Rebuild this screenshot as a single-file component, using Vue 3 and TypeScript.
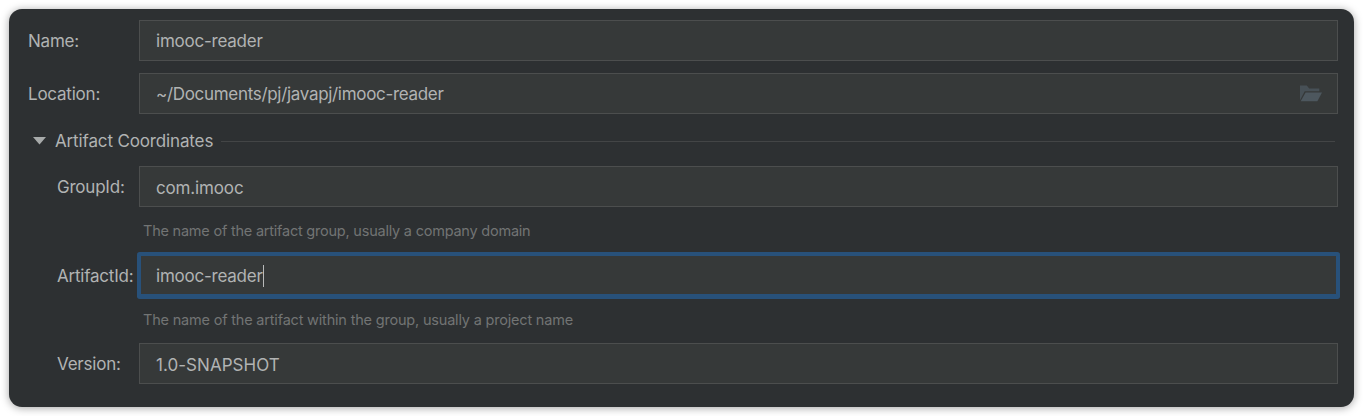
<script setup lang="ts">
import { ref } from 'vue'

interface Field {
  key: string
  label: string
  hint?: string
  browse?: boolean
}

const projectFields: Field[] = [
  { key: 'name', label: 'Name:' },
  { key: 'location', label: 'Location:', browse: true },
]

const coordinateFields: Field[] = [
  { key: 'group', label: 'GroupId:', hint: 'The name of the artifact group, usually a company domain' },
  { key: 'artifact', label: 'ArtifactId:', hint: 'The name of the artifact within the group, usually a project name' },
  { key: 'version', label: 'Version:' },
]

const values = ref<Record<string, string>>({
  name: 'imooc-reader',
  location: '~/Documents/pj/javapj/imooc-reader',
  group: 'com.imooc',
  artifact: 'imooc-reader',
  version: '1.0-SNAPSHOT',
})

const focused = ref('artifact')
</script>

<template>
  <main class="stage">
    <form class="panel" @submit.prevent>
      <div v-for="f in projectFields" :key="f.key" class="row" :class="f.key">
        <span class="label">{{ f.label }}</span>
        <div class="field" :class="{ focused: focused === f.key }" @click="focused = f.key">
          <span class="value">{{ values[f.key] }}</span>
          <i v-if="focused === f.key" class="caret"></i>
          <svg v-if="f.browse" class="folder" width="22" height="17" viewBox="0 0 22 17">
            <path d="M0 0.5H6.8L9.2 3.5H19.3V6.2H4.7L0 15.2Z" fill="#475056" />
            <path d="M5.6 7.5H22L17.4 16.3H0.7Z" fill="#4d575e" />
          </svg>
        </div>
      </div>

      <div class="section">
        <svg class="arrow" width="13" height="8" viewBox="0 0 13 8"><path d="M0 0H13L6.5 7.5Z" fill="#a7aaaa" /></svg>
        <span class="title">Artifact Coordinates</span>
        <span class="rule"></span>
      </div>

      <div v-for="f in coordinateFields" :key="f.key" class="group-block">
        <div class="row nested" :class="f.key">
          <span class="label">{{ f.label }}</span>
          <div class="field" :class="{ focused: focused === f.key }" @click="focused = f.key">
            <span class="value">{{ values[f.key] }}</span>
            <i v-if="focused === f.key" class="caret"></i>
          </div>
        </div>
        <p v-if="f.hint" class="hint" :class="f.key">{{ f.hint }}</p>
      </div>
    </form>
  </main>
</template>

<style>
body {
  background: #fff;
  overflow: hidden;
}
</style>

<style scoped>
.stage {
  box-sizing: border-box;
  height: 416px;
  padding: 9px;
  font-family: Inter, "Liberation Sans", sans-serif;
}
.panel {
  box-sizing: border-box;
  width: 1345px;
  height: 398px;
  padding: 11px 16px 0 19px;
  border-radius: 13px;
  background: #2d3032;
  box-shadow: 0 1px 9px rgba(0, 0, 0, 0.36);
  color: #b1b3b3;
  font-size: 17px;
}
.row {
  display: flex;
  height: 41px;
  margin-bottom: 11.5px;
}
.label {
  width: 111px;
  flex: none;
  line-height: 43px;
  letter-spacing: -0.22px;
  white-space: nowrap;
}
.nested .label {
  box-sizing: border-box;
  padding-left: 29px;
}
.field {
  box-sizing: border-box;
  flex: 1;
  display: flex;
  align-items: center;
  padding: 1px 15px 0 16px;
  border: 1px solid #4c4e4e;
  background: #363939;
}
.focused {
  padding: 1px 15px 0;
  border: 2px solid #28517a;
  border-top-width: 1px;
  border-radius: 1px;
  box-shadow: 0 1px 0 2px #28517a, 0 -1px 0 2px #28517a;
}
.value {
  letter-spacing: -0.23px;
  white-space: nowrap;
}
.location .value {
  letter-spacing: -0.31px;
}
.group .value {
  letter-spacing: -0.15px;
}
.version .value {
  letter-spacing: 0.04px;
}
.nested.group .field,
.nested.version .field {
  padding-top: 2px;
}
.caret {
  width: 1px;
  height: 22px;
  background: #b8baba;
}
.folder {
  margin-left: auto;
}
.section {
  display: flex;
  align-items: center;
  height: 32px;
  margin: 0 3px 9px 5px;
}
.arrow {
  margin-right: 9px;
}
.title {
  letter-spacing: -0.14px;
  white-space: nowrap;
}
.rule {
  flex: 1;
  height: 1px;
  margin: 1px 0 0 8px;
  background: #434546;
}
.nested {
  margin-bottom: 0;
}
.hint {
  height: 48px;
  margin: 0 0 0 115px;
  line-height: 48px;
  font-size: 14.5px;
  letter-spacing: -0.22px;
  color: #727474;
  white-space: nowrap;
}
.hint.artifact {
  height: 47px;
  letter-spacing: -0.19px;
}
</style>
